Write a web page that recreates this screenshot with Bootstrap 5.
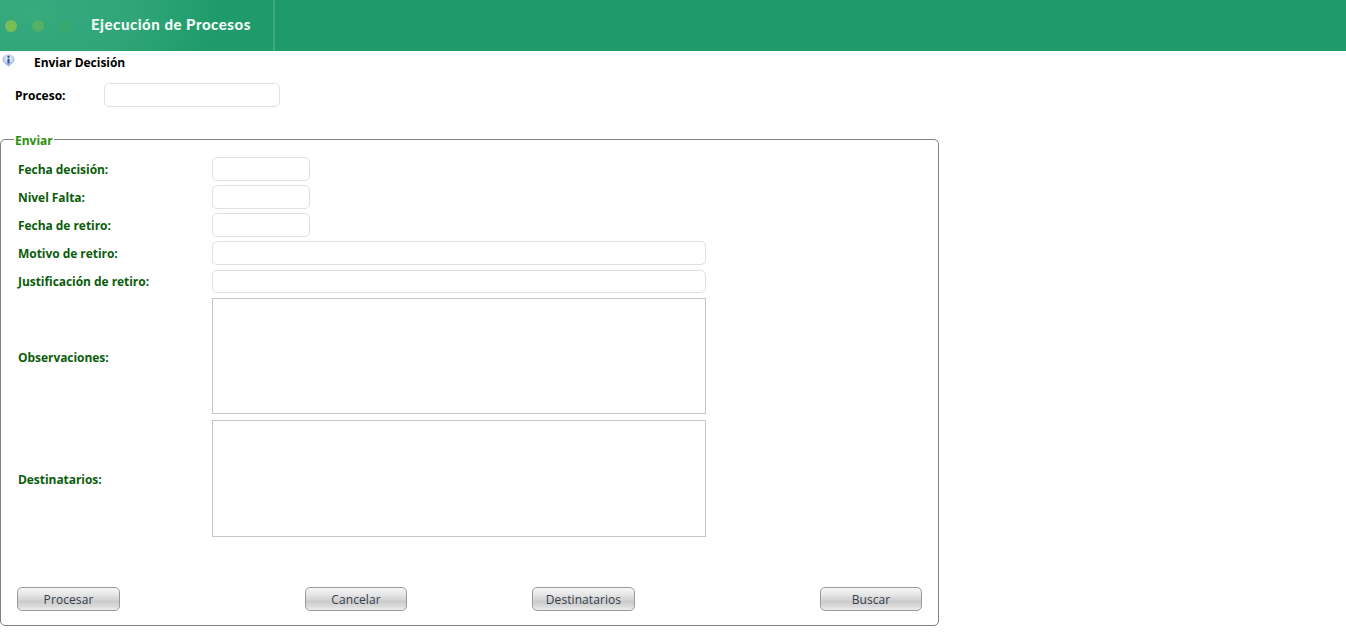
<!DOCTYPE html>
<html lang="es">
<head>
<meta charset="utf-8">
<title>Ejecución de Procesos</title>
<link href="https://cdn.jsdelivr.net/npm/bootstrap@5.3.0/dist/css/bootstrap.min.css" rel="stylesheet">
<style>
html,body{height:100%;}
body{background:#fff;font-family:"Open Sans","Liberation Sans",sans-serif;font-size:12px;color:#000;overflow:hidden;}
.topbar{height:51px;background:#1f9b6b;}
.topbrand{width:275px;height:51px;border-right:2px solid #3aa97e;background:radial-gradient(ellipse 190px 100px at 30px 10px,#37aa7e 0%,#2fa578 55%,#1f9b6b 100%);padding-left:5px;gap:15px;}
.dot{width:12px;height:12px;border-radius:50%;}
.dot-a{background:#79bd57;}
.dot-b{background:#55b064;}
.dot-c{background:#3aa76f;}
.toptitle{color:#f2faf6;font-family:"Lato","Open Sans",sans-serif;font-weight:900;font-size:15px;margin-left:5px;margin-bottom:2px;letter-spacing:.52px;}
.crumb{height:21px;padding-left:2px;}
.crumb-icon{margin-top:3px;}
.crumb-title{margin-left:19px;font-weight:700;font-size:12px;margin-top:3px;letter-spacing:-.03px;}
.proc-row{margin-top:11px;padding-left:15px;height:24px;}
.proc-label{width:89px;font-weight:700;padding-top:2px;}
.fld{display:block;border:1px solid #e0e0e0;border-radius:5px;background:#fff;height:24px;padding:0 6px;font-size:12px;outline:0;}
.w-proc{width:176px;}
.w-short{width:98px;}
.w-long{width:494px;}
.h-thin{height:23px;}
.area{display:block;border:1px solid #c6c6c6;background:#fff;width:494px;resize:none;outline:0;}
.h-obs{height:116px;}
.h-dest{height:117px;}
.box{width:939px;height:487px;margin:0;margin-top:32px;border:1px solid #808080;border-radius:5px;padding:17px 16px 14px;position:relative;}
.box-legend{position:absolute;top:-7px;left:13px;float:none;width:auto;margin:0;padding:1px 1px 0;background:#fff;color:#2a8f0a;font-weight:700;font-size:12px;line-height:14px;}
.frow{margin-top:4px;min-height:23px;}
.frow:first-child{margin-top:0;}
.gap-five{margin-top:5px;}
.gap-six{margin-top:6px;}
.flabel{width:195px;color:#0b5d0b;font-weight:700;padding:2px 0 0 1px;letter-spacing:-.05px;}
.lbl-up{padding-top:0;}
.lbl-down{padding-top:4px;}
.btn-sil{width:103px;height:24px;padding:2px 0 0;font-size:12px;color:#33404d;letter-spacing:.08px;border:1px solid #9a9a9a;border-radius:5px;background:linear-gradient(#f6f6f6 0%,#e8e8e8 28%,#cbcbcb 62%,#dcdcdc 85%,#eeeeee 100%);}
.btn-sil:hover{color:#33404d;border-color:#9a9a9a;}
.btn-narrow{width:102px;}
.btn-line{position:absolute;left:16px;right:16px;bottom:14px;}
.btn-mid{gap:125px;}
</style>
</head>
<body>
<header class="topbar d-flex">
  <div class="topbrand d-flex align-items-center">
    <span class="dot dot-a"></span><span class="dot dot-b"></span><span class="dot dot-c"></span>
    <span class="toptitle">Ejecución de Procesos</span>
  </div>
</header>
<div class="crumb d-flex align-items-start">
  <svg class="crumb-icon" width="13" height="13" viewBox="0 0 13 13" aria-hidden="true">
    <defs><radialGradient id="gl" cx="50%" cy="35%" r="65%"><stop offset="0" stop-color="#ffffff"/><stop offset=".55" stop-color="#c5d3ec"/><stop offset="1" stop-color="#7d97c9"/></radialGradient></defs>
    <path d="M6.500 .5C10 .5 12.500 2.500 12.500 5.500C12.500 8.500 9.500 9.800 6.500 12.500C3.500 9.800 .5 8.500 .5 5.500C.5 2.500 3 .5 6.500 .5z" fill="url(#gl)"/>
    <circle cx="6.500" cy="2.700" r="1.200" fill="#2f56a3"/>
    <rect x="5.400" y="4.500" width="2.200" height="5" rx=".6" fill="#2f56a3"/>
  </svg>
  <span class="crumb-title">Enviar Decisión</span>
</div>
<div class="proc-row d-flex align-items-center">
  <label class="proc-label" for="p">Proceso:</label>
  <input id="p" class="fld w-proc" type="text">
</div>
<fieldset class="box">
  <legend class="box-legend">Enviar</legend>
  <div class="d-flex flex-column">
    <div class="frow d-flex align-items-center"><label class="flabel">Fecha decisión:</label><input class="fld w-short" type="text"></div>
    <div class="frow d-flex align-items-center"><label class="flabel">Nivel Falta:</label><input class="fld w-short" type="text"></div>
    <div class="frow d-flex align-items-center"><label class="flabel">Fecha de retiro:</label><input class="fld w-short" type="text"></div>
    <div class="frow d-flex align-items-center"><label class="flabel">Motivo de retiro:</label><input class="fld w-long" type="text"></div>
    <div class="frow gap-five d-flex align-items-center"><label class="flabel lbl-up">Justificación de retiro:</label><input class="fld w-long h-thin" type="text"></div>
    <div class="frow gap-five d-flex align-items-center"><label class="flabel lbl-down">Observaciones:</label><textarea class="area h-obs"></textarea></div>
    <div class="frow gap-six d-flex align-items-center"><label class="flabel">Destinatarios:</label><textarea class="area h-dest"></textarea></div>
  </div>
  <div class="btn-line d-flex justify-content-between">
    <button type="button" class="btn btn-sil">Procesar</button>
    <div class="btn-mid d-flex">
      <button type="button" class="btn btn-sil btn-narrow">Cancelar</button>
      <button type="button" class="btn btn-sil">Destinatarios</button>
    </div>
    <button type="button" class="btn btn-sil btn-narrow">Buscar</button>
  </div>
</fieldset>
<script src="https://cdn.jsdelivr.net/npm/bootstrap@5.3.0/dist/js/bootstrap.bundle.min.js"></script>
</body>
</html>
